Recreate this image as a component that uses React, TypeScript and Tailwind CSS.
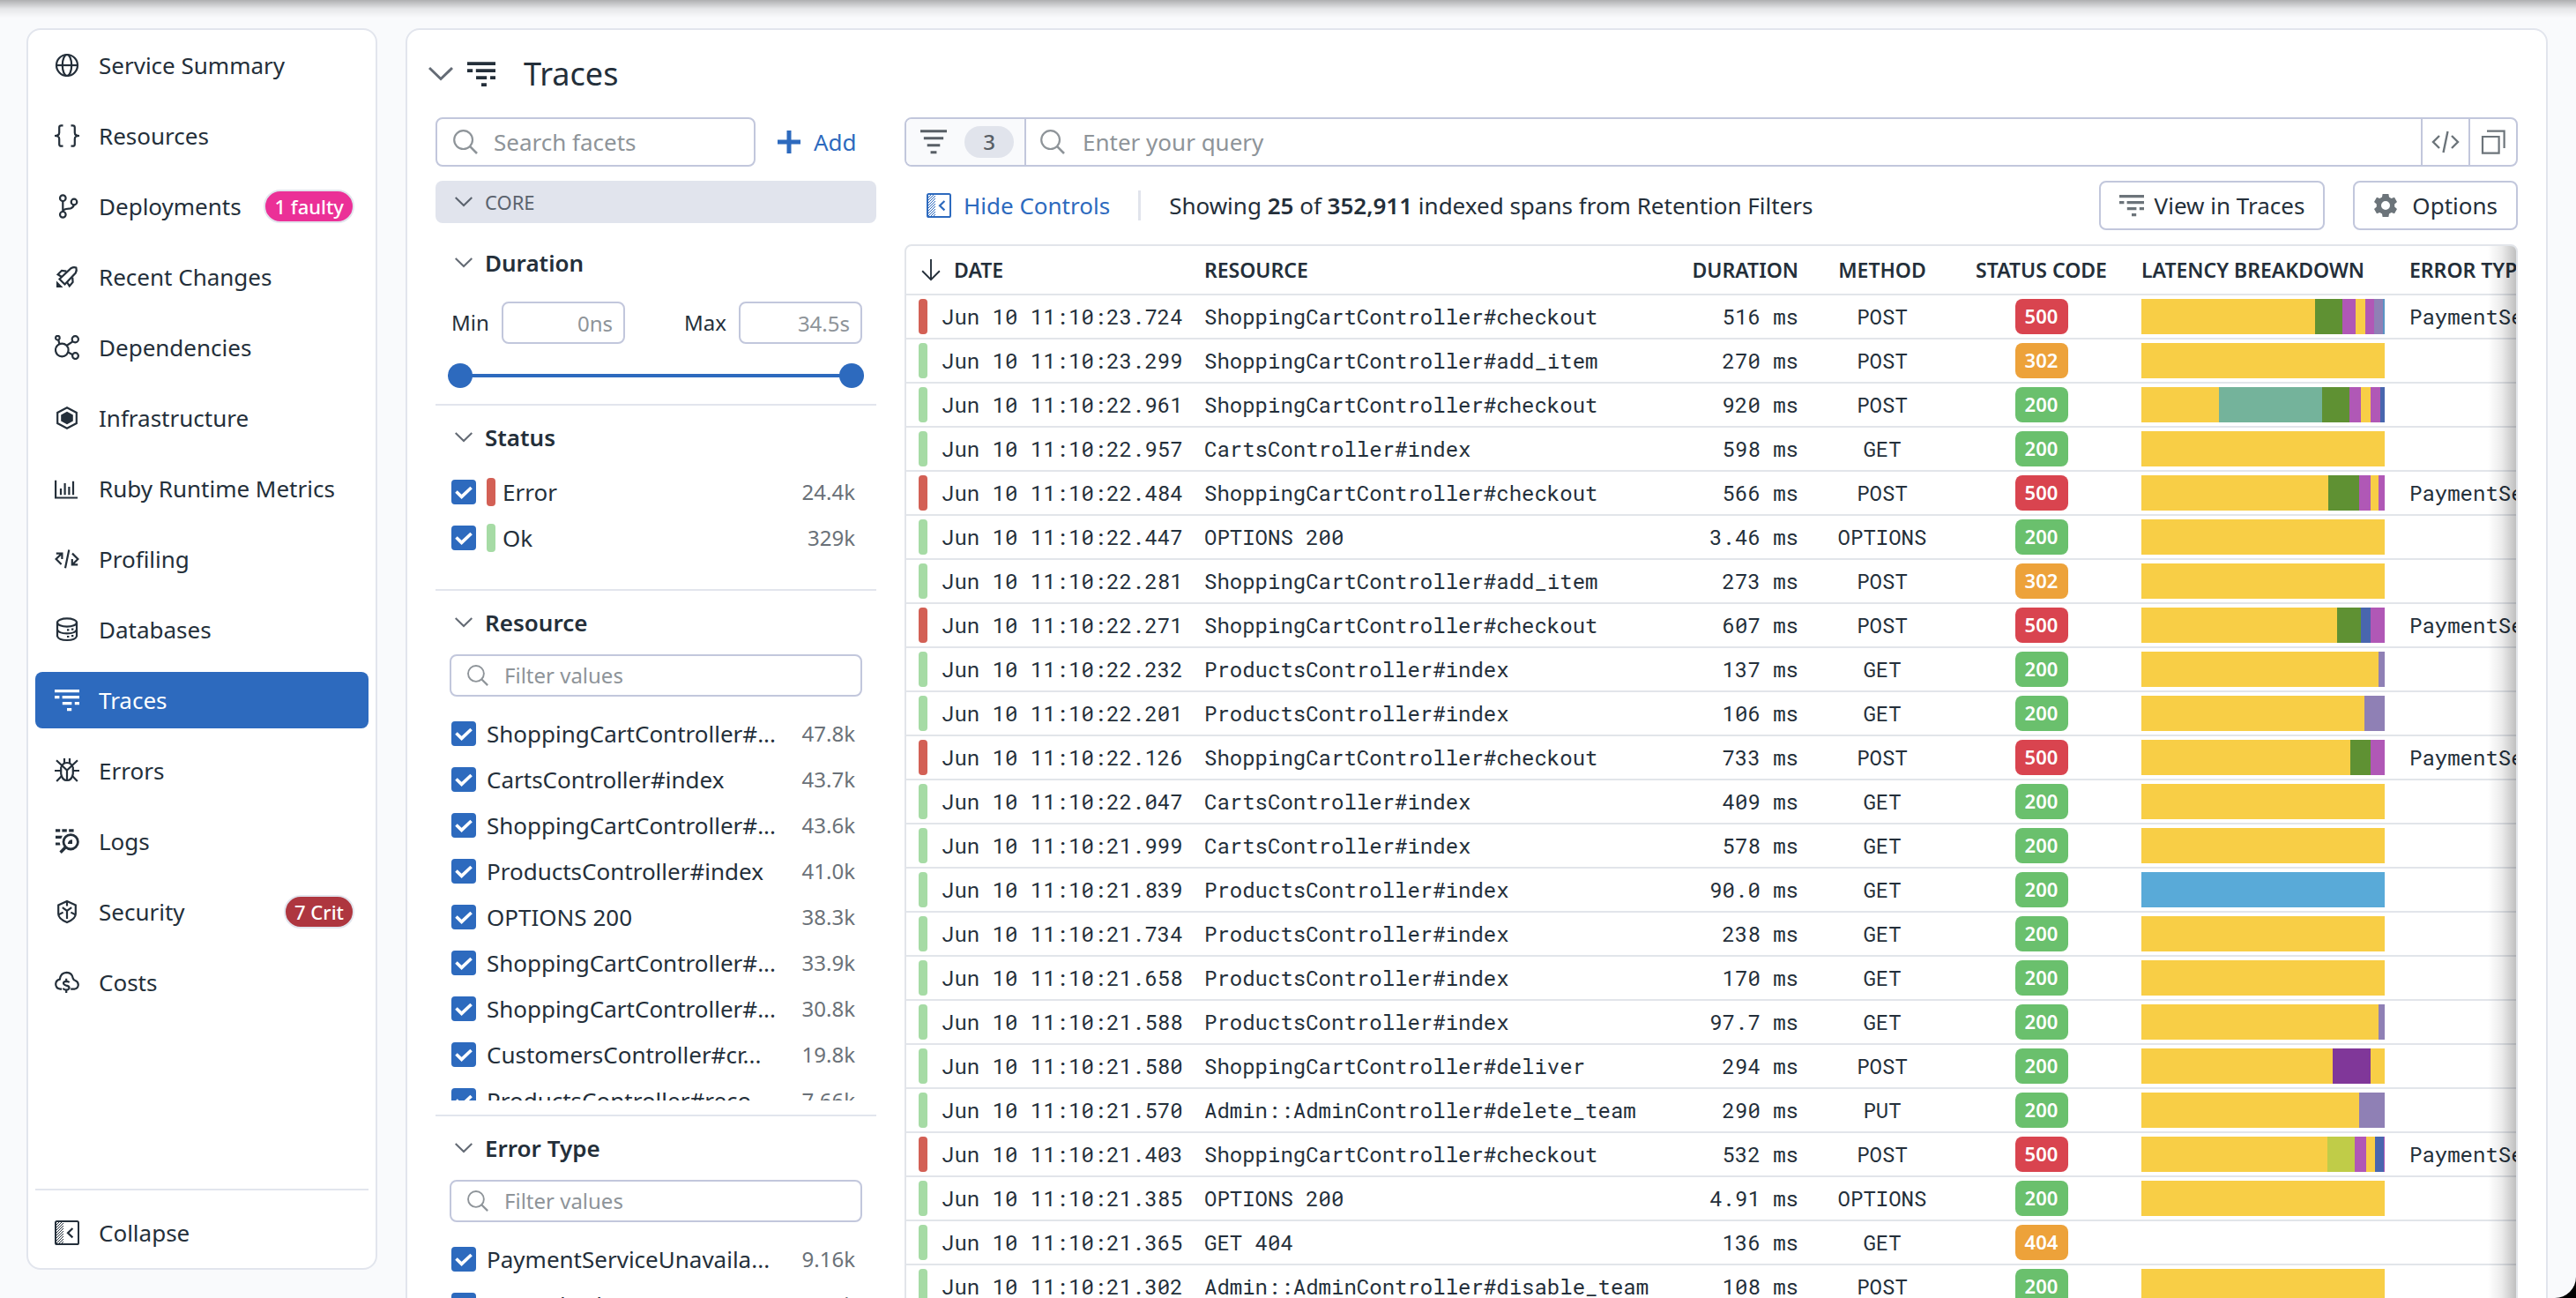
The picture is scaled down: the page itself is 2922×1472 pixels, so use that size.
import React, { useId, useState } from "react";

type IconProps = { className?: string };

function Svg({ className, children }: { className?: string; children: React.ReactNode }) {
  return (
    <svg
      viewBox="0 0 28 28"
      className={className ?? "size-7"}
      fill="none"
      stroke="currentColor"
      strokeWidth={2.2}
      aria-hidden="true"
    >
      {children}
    </svg>
  );
}

const GlobeIcon = ({ className }: IconProps) => (
  <Svg className={className}>
    <circle cx="14" cy="14" r="12" />
    <ellipse cx="14" cy="14" rx="5.2" ry="12" />
    <path d="M2 14H26" />
  </Svg>
);

const BracesIcon = ({ className }: IconProps) => (
  <Svg className={className}>
    <path d="M9.5 2.3H7.5Q5.2 2.3 5.2 4.6V10.5Q5.2 14 0 14Q5.2 14 5.2 17.5V23.4Q5.2 25.7 7.5 25.7H9.5" />
    <path d="M18.5 2.3H20.5Q22.8 2.3 22.8 4.6V10.5Q22.8 14 28 14Q22.8 14 22.8 17.5V23.4Q22.8 25.7 20.5 25.7H18.5" />
  </Svg>
);

const BranchIcon = ({ className }: IconProps) => (
  <Svg className={className}>
    <circle cx="9.3" cy="4.7" r="3.3" />
    <circle cx="9.3" cy="23.3" r="3.3" />
    <circle cx="22" cy="9" r="3.3" />
    <path d="M9.3 8V20M21.8 12.3Q21 15.8 18 16.3L13 17Q9.8 17.6 9.3 20" />
  </Svg>
);

const RocketIcon = ({ className }: IconProps) => (
  <Svg className={className}>
    <path d="M5.5 16.5L18.5 4.2Q21.5 2.6 24.4 3.6Q25.4 6.5 23.8 9.5L11.5 22.5Z" />
    <path d="M8 14L3.6 11.2L8 6.8L13.4 7.6M14 20L16.8 24.4L20.6 20L20.2 14.6" />
    <path d="M2 18.5V26H9.5Z" fill="currentColor" stroke="none" />
  </Svg>
);

const NodesIcon = ({ className }: IconProps) => (
  <Svg className={className}>
    <circle cx="8.3" cy="17" r="7.3" />
    <circle cx="3.4" cy="3.2" r="2.3" />
    <circle cx="23.3" cy="4.7" r="3.6" />
    <circle cx="23.5" cy="23.6" r="3.4" />
    <path d="M4.2 5.4L5.4 10M13.5 12L20.8 7.2M15.3 19.5L20.4 22.2" />
  </Svg>
);

const HexIcon = ({ className }: IconProps) => (
  <Svg className={className}>
    <path d="M14 2.2L24.8 8V20L14 25.8L3.2 20V8Z" />
    <path d="M14 6.7L20.8 10.4V17.6L14 21.3L7.2 17.6V10.4Z" fill="currentColor" stroke="none" />
  </Svg>
);

const BarsIcon = ({ className }: IconProps) => (
  <Svg className={className}>
    <path d="M1.1 4.7V24.5H26" />
    <path d="M7 14V21.3M11.6 8V21.3M16.4 12V21.3M21 5.7V21.3" />
  </Svg>
);

const ProfilingIcon = ({ className }: IconProps) => (
  <Svg className={className}>
    <path d="M7.6 20L1.6 14L8 7.8M1.8 7.6H8.4V14M16.3 3.5L12 24.3" />
    <path d="M20 7.6L26.4 14L20.4 20M19.8 14V20.4H26.2" />
  </Svg>
);

const DatabaseIcon = ({ className }: IconProps) => (
  <Svg className={className}>
    <ellipse cx="14" cy="6" rx="11" ry="4.6" />
    <path d="M3 6V21.5Q4.5 26 14 26T25 21.5V6M3 14Q4.5 18.4 14 18.4T25 14" />
    <path d="M14 14.4H16.4M19 13.6H21.4M14 22H16.4M19 21.2H21.4" />
  </Svg>
);

const TracesIcon = ({ className }: IconProps) => (
  <Svg className={className}>
    <path
      fill="currentColor"
      stroke="none"
      d="M0 2H28V5.2H0ZM0 9H5.4V12.2H0ZM8.6 9H28V12.2H8.6ZM8.8 16H19.4V19.2H8.8ZM22.8 16H28V19.2H22.8ZM14 23H19.2V26.2H14Z"
    />
  </Svg>
);

const BugIcon = ({ className }: IconProps) => (
  <Svg className={className}>
    <path d="M7.2 10.5Q9 5 14 5T20.8 10.5V17.5Q19.6 25 14 25T7.2 17.5Z" />
    <path d="M2 2.3L14 13.6L26 2.3M14 13.6V25M0 14H7M21 14H28M8.2 19.8L2.2 26M19.8 19.8L25.8 26M11 0V5.5M17 0V5.5" />
  </Svg>
);

const LogsIcon = ({ className }: IconProps) => (
  <Svg className={className}>
    <path
      fill="currentColor"
      stroke="none"
      d="M1 .3H6.2V3.5H1ZM8.4 .3H13.8V3.5H8.4ZM16.2 .3H21.6V3.5H16.2ZM1 7.8H8.8L7.4 11H1ZM1 15.4H5.8L6.4 18.6H1ZM14.8 17Q15.4 12.2 20 12.2V17Z"
    />
    <circle cx="18.2" cy="14.8" r="8.2" strokeWidth="2.8" />
    <path d="M12.4 20.8L6.6 26.8" strokeWidth="3.4" />
  </Svg>
);

const ShieldIcon = ({ className }: IconProps) => (
  <Svg className={className}>
    <path d="M14 2L23.8 6.4V16.5Q23.8 22 14 26Q4.2 22 4.2 16.5V6.4Z" />
    <path d="M14 2V7.6M8.8 9.2L14 12.8L19.2 9.2M14 12.8V22M4.4 17.4L9.6 14.6M23.6 17.4L18.4 14.6" />
  </Svg>
);

const CostIcon = ({ className }: IconProps) => (
  <Svg className={className}>
    <path d="M8 21.6H6.4Q1.2 21 1.2 15.8Q1.6 11.4 5.8 10.6Q6.8 3 13.6 2.8Q19.8 3 20.8 9.6Q21.2 11.4 23.4 12Q26.8 13.4 26.8 17Q26.4 21.2 22.4 21.6H18.2" />
    <path d="M16.6 14.2Q15.8 12.8 13.2 12.8Q10 13 10 15Q10.2 17 13.2 17.6Q16.6 18.2 16.6 20.4Q16.2 22.6 13.2 22.6Q10.4 22.6 9.4 20.8M13.2 9.8V13M13.2 22.6V26" />
  </Svg>
);

const CollapseIcon = ({ className }: IconProps) => (
  <Svg className={className}>
    <rect x="1" y="1" width="26" height="26" rx="1.6" strokeWidth="2" />
    <path
      strokeWidth="1"
      d="M2 5L5 2M2 8L8 2M2 11L10 3M2 14L10 6M2 17L10 9M2 20L10 12M2 23L10 15M2 26L10 18M5 26L10 21M8 26L10 24"
    />
    <path d="M20.4 9L15 14.2L20.4 19.4" />
  </Svg>
);

const SearchIcon = ({ className }: IconProps) => (
  <Svg className={className}>
    <circle cx="11.6" cy="11.6" r="10.4" />
    <path d="M19.2 19.2L27 27" strokeWidth="2.6" />
  </Svg>
);

const CaretIcon = ({ className }: IconProps) => (
  <Svg className={className}>
    <path d="M1 7L14 19.5L27 7" strokeWidth="3" />
  </Svg>
);

const FilterIcon = ({ className }: IconProps) => (
  <Svg className={className}>
    <path
      fill="currentColor"
      stroke="none"
      d="M0 1.2H28V4H0ZM3.6 8.6H24.4V11.4H3.6ZM7.2 16.2H20.8V19H7.2ZM10.8 23.6H17.2V26.4H10.8Z"
    />
  </Svg>
);

const GearIcon = ({ className }: IconProps) => (
  <Svg className={className}>
    <path
      fill="currentColor"
      fillRule="evenodd"
      stroke="none"
      d="M10.6 1H17.4L18 4.6L20.6 6.1L24 4.7L27 10L24.2 12.4V15.6L27 18L24 23.3L20.6 21.9L18 23.4L17.4 27H10.6L10 23.4L7.4 21.9L4 23.3L1 18L3.8 15.6V12.4L1 10L4 4.7L7.4 6.1L10 4.6ZM14 9A5 5 0 1 0 14 19A5 5 0 1 0 14 9Z"
    />
  </Svg>
);

type NavItem = {
  label: string;
  Icon: (p: IconProps) => React.ReactElement;
  badge?: string;
  badgeClass?: string;
  active?: boolean;
};

const NAV: NavItem[] = [
  { label: "Service Summary", Icon: GlobeIcon },
  { label: "Resources", Icon: BracesIcon },
  { label: "Deployments", Icon: BranchIcon, badge: "1 faulty", badgeClass: "bg-[#eb3097]" },
  { label: "Recent Changes", Icon: RocketIcon },
  { label: "Dependencies", Icon: NodesIcon },
  { label: "Infrastructure", Icon: HexIcon },
  { label: "Ruby Runtime Metrics", Icon: BarsIcon },
  { label: "Profiling", Icon: ProfilingIcon },
  { label: "Databases", Icon: DatabaseIcon },
  { label: "Traces", Icon: TracesIcon, active: true },
  { label: "Errors", Icon: BugIcon },
  { label: "Logs", Icon: LogsIcon },
  { label: "Security", Icon: ShieldIcon, badge: "7 Crit", badgeClass: "bg-[#ae363f]" },
  { label: "Costs", Icon: CostIcon },
];

function Sidebar() {
  return (
    <nav className="flex h-[calc(100vh-64px)] w-[398px] shrink-0 flex-col rounded-2xl border-2 border-[#e2e5ed] bg-white p-2">
      <ul className="flex flex-col gap-4">
        {NAV.map(({ label, Icon, badge, badgeClass, active }) => (
          <li key={label}>
            <a
              href="#"
              aria-current={active ? "page" : undefined}
              className={`flex h-16 items-center rounded-lg pr-4 pl-[22px] ${active ? "bg-[#2d6abe] text-white" : ""}`}
            >
              <Icon className="size-7 shrink-0" />
              <span className="ml-[22px] flex-1 whitespace-nowrap">{label}</span>
              {badge && (
                <span
                  className={`flex h-[38px] items-center rounded-full border-2 border-[#e2e5ed] px-2.5 text-[22px] font-medium text-white ${badgeClass}`}
                >
                  {badge}
                </span>
              )}
            </a>
          </li>
        ))}
      </ul>
      <div className="mt-auto border-t-2 border-[#e2e5ed] pt-4">
        <button type="button" className="flex h-16 w-full items-center pl-[22px]">
          <CollapseIcon className="size-7" />
          <span className="ml-[22px]">Collapse</span>
        </button>
      </div>
    </nav>
  );
}

function SectionHeader({ title }: { title: string }) {
  return (
    <h3>
      <button type="button" className="flex h-12 items-center pl-[22px] font-semibold">
        <CaretIcon className="size-5 text-[#646b75]" />
        <span className="ml-3.5">{title}</span>
      </button>
    </h3>
  );
}

function FilterBox({ name }: { name: string }) {
  return (
    <label className="mx-4 mt-3 flex h-12 items-center rounded-lg border-2 border-[#c2c7dc] pl-[18px]">
      <SearchIcon className="size-6 shrink-0 text-[#8e9499]" />
      <input
        type="text"
        aria-label={`Filter ${name} values`}
        placeholder="Filter values"
        className="ml-[18px] w-full min-w-0 flex-1 bg-transparent text-2xl outline-none placeholder:text-[#8e9499]"
      />
    </label>
  );
}

function FacetRow({ label, count, barClass }: { label: string; count: string; barClass?: string }) {
  const id = useId();
  const [checked, setChecked] = useState(true);
  return (
    <li className="flex h-[52px] items-center pr-6 pl-[18px]">
      <span className="relative flex size-7 shrink-0">
        <input
          id={id}
          type="checkbox"
          checked={checked}
          onChange={(e) => setChecked(e.target.checked)}
          className="size-7 appearance-none rounded-sm border-2 border-[#2d6abe] checked:bg-[#2d6abe]"
        />
        {checked && (
          <svg viewBox="0 0 28 28" className="pointer-events-none absolute inset-0 text-white" aria-hidden="true">
            <path d="M5.5 13.5L11.6 19.4L22.6 9" fill="none" stroke="currentColor" strokeWidth="3.6" />
          </svg>
        )}
      </span>
      {barClass && <span className={`ml-3 h-8 w-2.5 rounded-sm ${barClass}`} />}
      <label
        htmlFor={id}
        className={`flex-1 overflow-hidden whitespace-nowrap ${barClass ? "ml-2" : "ml-3"}`}
      >
        {label}
      </label>
      <span className="text-2xl text-[#6a7178]">{count}</span>
    </li>
  );
}

const RESOURCE_FACETS: [string, string][] = [
  ["ShoppingCartController#...", "47.8k"],
  ["CartsController#index", "43.7k"],
  ["ShoppingCartController#...", "43.6k"],
  ["ProductsController#index", "41.0k"],
  ["OPTIONS 200", "38.3k"],
  ["ShoppingCartController#...", "33.9k"],
  ["ShoppingCartController#...", "30.8k"],
  ["CustomersController#cr...", "19.8k"],
  ["ProductsController#reco...", "7.66k"],
];

const THUMB =
  "pointer-events-none absolute inset-0 h-7 w-full appearance-none bg-transparent [&::-webkit-slider-thumb]:pointer-events-auto [&::-webkit-slider-thumb]:size-7 [&::-webkit-slider-thumb]:appearance-none [&::-webkit-slider-thumb]:rounded-full [&::-webkit-slider-thumb]:bg-[#2d6abe]";

function Facets() {
  return (
    <aside className="w-[500px] shrink-0">
      <div className="flex items-center">
        <label className="flex h-14 w-[363px] items-center rounded-lg border-2 border-[#c2c7dc] pl-[18px]">
          <SearchIcon className="size-7 shrink-0 text-[#8e9499]" />
          <input
            type="text"
            aria-label="Search facets"
            placeholder="Search facets"
            className="ml-[18px] w-full min-w-0 flex-1 bg-transparent outline-none placeholder:text-[#8e9499]"
          />
        </label>
        <button type="button" className="ml-6 flex items-center text-[#2d6abe]">
          <Svg className="size-7">
            <path d="M14 1V27M1 14H27" strokeWidth="5" />
          </Svg>
          <span className="ml-3.5">Add</span>
        </button>
      </div>

      <button
        type="button"
        className="mt-4 flex h-12 w-full items-center rounded-lg bg-[#e1e4ed] pl-[22px] text-[22px] text-[#5b636e]"
      >
        <CaretIcon className="size-5" />
        <span className="ml-3.5">CORE</span>
      </button>

      <section className="mt-[21px]">
        <SectionHeader title="Duration" />
        <div className="mt-5 flex items-center justify-between px-4 text-2xl">
          <label className="flex items-center">
            <span className="ml-0.5 w-[57px]">Min</span>
            <input
              type="text"
              placeholder="0ns"
              className="h-12 w-[140px] rounded-lg border-2 border-[#c2c7dc] px-3 text-right outline-none placeholder:text-[#8e9499]"
            />
          </label>
          <label className="flex items-center">
            <span className="w-[62px]">Max</span>
            <input
              type="text"
              placeholder="34.5s"
              className="h-12 w-[140px] rounded-lg border-2 border-[#c2c7dc] px-3 text-right outline-none placeholder:text-[#8e9499]"
            />
          </label>
        </div>
        <div className="relative mx-3.5 mt-[22px] flex h-7 items-center">
          <div className="h-1 w-full rounded-full bg-[#2d6abe]" />
          <input type="range" aria-label="Minimum duration" min={0} max={100} defaultValue={0} className={THUMB} />
          <input type="range" aria-label="Maximum duration" min={0} max={100} defaultValue={100} className={THUMB} />
        </div>
      </section>

      <section className="mt-[18px] border-t-2 border-[#e2e5ed] pt-3">
        <SectionHeader title="Status" />
        <ul className="mt-3">
          <FacetRow label="Error" count="24.4k" barClass="bg-[#d36055]" />
          <FacetRow label="Ok" count="329k" barClass="bg-[#a6dba5]" />
        </ul>
      </section>

      <section className="mt-8 border-t-2 border-[#e2e5ed] pt-3">
        <SectionHeader title="Resource" />
        <FilterBox name="resource" />
        <ul className="mt-4 max-h-[442px] overflow-hidden">
          {RESOURCE_FACETS.map(([label, count], i) => (
            <FacetRow key={i} label={label} count={count} />
          ))}
        </ul>
      </section>

      <section className="mt-4 border-t-2 border-[#e2e5ed] pt-3">
        <SectionHeader title="Error Type" />
        <FilterBox name="error type" />
        <ul className="mt-4">
          <FacetRow label="PaymentServiceUnavaila..." count="9.16k" />
          <FacetRow label="NoMethodError" count="5.05k" />
        </ul>
      </section>
    </aside>
  );
}

const SEG = {
  y: "bg-[#f8ce46]",
  g: "bg-[#5f9133]",
  m: "bg-[#b058b6]",
  v: "bg-[#8f80b5]",
  s: "bg-[#5a94c4]",
  t: "bg-[#74b39b]",
  b: "bg-[#4966ae]",
  c: "bg-[#59aad8]",
  p: "bg-[#803799]",
  l: "bg-[#c0cc48]",
};

type Seg = [keyof typeof SEG, number];
type Span = { time: string; resource: string; duration: string; method: string; code: number; segs: Seg[] };

const FULL: Seg[] = [["y", 450]];
const CHECKOUT = "ShoppingCartController#checkout";
const PRODUCTS = "ProductsController#index";
const CARTS = "CartsController#index";

const span = (
  time: string,
  resource: string,
  duration: string,
  method: string,
  code: number,
  segs: Seg[] = FULL,
): Span => ({ time, resource, duration, method, code, segs });

const SPANS: Span[] = [
  span("23.724", CHECKOUT, "516 ms", "POST", 500, [["y", 322], ["g", 50], ["m", 25], ["y", 17], ["m", 17], ["v", 15], ["s", 4]]),
  span("23.299", "ShoppingCartController#add_item", "270 ms", "POST", 302),
  span("22.961", CHECKOUT, "920 ms", "POST", 200, [["y", 144], ["t", 191], ["g", 49], ["m", 22], ["y", 18], ["m", 18], ["b", 8]]),
  span("22.957", CARTS, "598 ms", "GET", 200),
  span("22.484", CHECKOUT, "566 ms", "POST", 500, [["y", 346], ["g", 56], ["m", 22], ["y", 15], ["m", 11]]),
  span("22.447", "OPTIONS 200", "3.46 ms", "OPTIONS", 200),
  span("22.281", "ShoppingCartController#add_item", "273 ms", "POST", 302),
  span("22.271", CHECKOUT, "607 ms", "POST", 500, [["y", 362], ["g", 44], ["b", 18], ["m", 26]]),
  span("22.232", PRODUCTS, "137 ms", "GET", 200, [["y", 439], ["v", 11]]),
  span("22.201", PRODUCTS, "106 ms", "GET", 200, [["y", 413], ["v", 37]]),
  span("22.126", CHECKOUT, "733 ms", "POST", 500, [["y", 387], ["g", 37], ["m", 26]]),
  span("22.047", CARTS, "409 ms", "GET", 200),
  span("21.999", CARTS, "578 ms", "GET", 200),
  span("21.839", PRODUCTS, "90.0 ms", "GET", 200, [["c", 450]]),
  span("21.734", PRODUCTS, "238 ms", "GET", 200),
  span("21.658", PRODUCTS, "170 ms", "GET", 200),
  span("21.588", PRODUCTS, "97.7 ms", "GET", 200, [["y", 439], ["v", 11]]),
  span("21.580", "ShoppingCartController#deliver", "294 ms", "POST", 200, [["y", 354], ["p", 70], ["y", 26]]),
  span("21.570", "Admin::AdminController#delete_team", "290 ms", "PUT", 200, [["y", 403], ["v", 47]]),
  span("21.403", CHECKOUT, "532 ms", "POST", 500, [["y", 344], ["l", 51], ["m", 21], ["y", 16], ["b", 16], ["m", 2]]),
  span("21.385", "OPTIONS 200", "4.91 ms", "OPTIONS", 200),
  span("21.365", "GET 404", "136 ms", "GET", 404, []),
  span("21.302", "Admin::AdminController#disable_team", "108 ms", "POST", 200),
];

function codeClass(code: number) {
  if (code >= 500) return "bg-[#d9444f]";
  if (code >= 300) return "bg-[#eda23a]";
  return "bg-[#6ac06d]";
}

function SpanTable() {
  return (
    <div className="relative mt-4 overflow-hidden rounded-lg border-2 border-[#e2e5ea]">
      <table className="w-full table-fixed border-collapse text-left whitespace-nowrap">
        <colgroup>
          <col className="w-[324px]" />
          <col />
          <col className="w-[150px]" />
          <col className="w-[162px]" />
          <col className="w-[199px]" />
          <col className="w-[304px]" />
          <col className="w-[135px]" />
        </colgroup>
        <thead>
          <tr className="h-[55px] border-b-2 border-[#e2e5ea] text-[23px] [&>th]:overflow-hidden [&>th]:px-3.5 [&>th]:font-semibold">
            <th>
              <button type="button" className="flex items-center gap-3.5">
                <Svg className="ml-0.5 h-7 w-6">
                  <path d="M14 0V26.5M2.5 15.5L14 27L25.5 15.5" />
                </Svg>
                DATE
              </button>
            </th>
            <th>RESOURCE</th>
            <th className="text-right">DURATION</th>
            <th className="text-center">METHOD</th>
            <th className="text-center">STATUS CODE</th>
            <th>LATENCY BREAKDOWN</th>
            <th>ERROR TYPE</th>
          </tr>
        </thead>
        <tbody className="font-['Roboto_Mono','Liberation_Mono',monospace] text-2xl">
          {SPANS.map((s) => (
            <tr
              key={s.time}
              className="h-[50px] border-b-2 border-[#e2e5ea] [&>td]:overflow-hidden [&>td]:px-3.5"
            >
              <td>
                <div className="flex items-center gap-4">
                  <span
                    className={`h-10 w-2.5 shrink-0 rounded-sm ${s.code >= 500 ? "bg-[#d36055]" : "bg-[#a6dba5]"}`}
                  />
                  {`Jun 10 11:10:${s.time}`}
                </div>
              </td>
              <td>{s.resource}</td>
              <td className="text-right">{s.duration}</td>
              <td className="text-center">{s.method}</td>
              <td>
                <span
                  className={`mx-auto flex h-10 w-[60px] items-center justify-center rounded-lg font-['Noto_Sans',sans-serif] text-[22px] font-semibold text-white ${codeClass(s.code)}`}
                >
                  {s.code}
                </span>
              </td>
              <td>
                <div className="flex h-10">
                  {s.segs.map(([color, amount], i) => (
                    <span key={i} className={SEG[color]} style={{ width: `${(amount / 450) * 100}%` }} />
                  ))}
                </div>
              </td>
              <td>{s.code >= 500 ? "PaymentServiceUnavailable" : ""}</td>
            </tr>
          ))}
        </tbody>
      </table>
      <div className="pointer-events-none absolute inset-y-0 right-0 w-8 bg-linear-to-l from-black/25 via-black/8 to-transparent" />
    </div>
  );
}

function Explorer() {
  const outlined = "flex h-14 items-center rounded-lg border-2 border-[#c2c7dc] px-[21px]";
  return (
    <div className="min-w-0 flex-1">
      <div className="flex h-14 overflow-hidden rounded-lg border-2 border-[#c2c7dc]">
        <button
          type="button"
          className="flex items-center border-r-2 border-[#c2c7dc] bg-[#f9fafc] pr-3 pl-4 text-[#585f66]"
        >
          <FilterIcon className="size-[30px]" />
          <span className="ml-5 flex h-9 w-14 items-center justify-center rounded-full bg-[#e1e4ec] text-2xl font-medium">
            3
          </span>
        </button>
        <label className="flex flex-1 items-center pl-4">
          <SearchIcon className="size-7 shrink-0 text-[#8e9499]" />
          <input
            type="text"
            aria-label="Query"
            placeholder="Enter your query"
            className="ml-5 w-full min-w-0 flex-1 bg-transparent outline-none placeholder:text-[#8e9499]"
          />
        </label>
        <button
          type="button"
          aria-label="Edit as code"
          className="flex w-[54px] items-center justify-center border-l-2 border-[#c2c7dc] text-[#6c747a]"
        >
          <svg viewBox="0 0 32 28" className="h-7 w-8" fill="none" stroke="currentColor" strokeWidth="2.4" aria-hidden="true">
            <path d="M9 7L2 14L9 21M23 7L30 14L23 21M18.5 2L13.5 26" />
          </svg>
        </button>
        <button
          type="button"
          aria-label="Copy query"
          className="flex w-[54px] items-center justify-center border-l-2 border-[#c2c7dc] text-[#6c747a]"
        >
          <Svg className="size-7">
            <path d="M2 8H20.6V26.6H2ZM7 1.6H26.6V21" />
          </Svg>
        </button>
      </div>

      <div className="mt-4 flex h-14 items-center">
        <button type="button" className="ml-[25px] flex items-center gap-3.5 text-[#2d6abe]">
          <CollapseIcon className="size-7" />
          Hide Controls
        </button>
        <span className="ml-8 h-[34px] w-[3px] bg-[#e1e4ec]" />
        <p className="ml-8 whitespace-nowrap">
          Showing <b className="font-semibold">25</b> of <b className="font-semibold">352,911</b> indexed spans from
          Retention Filters
        </p>
        <div className="ml-auto flex gap-8">
          <button type="button" className={outlined}>
            <TracesIcon className="size-7 text-[#6c747a]" />
            <span className="ml-3">View in Traces</span>
          </button>
          <button type="button" className={outlined}>
            <GearIcon className="size-7 text-[#6c747a]" />
            <span className="ml-4">Options</span>
          </button>
        </div>
      </div>

      <SpanTable />
    </div>
  );
}

export default function App() {
  return (
    <div className="h-screen bg-black">
      <div className="relative flex h-screen gap-8 overflow-hidden rounded-br-3xl bg-[#f9fafc] pt-8 pr-8 pl-[30px] font-['Noto_Sans',sans-serif] text-[26px] leading-9 text-[#242f3a]">
        <div className="pointer-events-none absolute inset-x-0 top-0 h-5 bg-linear-to-b from-black/30 via-black/8 to-transparent" />
        <Sidebar />
        <main className="h-max min-w-0 flex-1 rounded-2xl border-2 border-[#e2e5ed] bg-white">
          <header className="flex h-[99px] items-center pl-6">
            <button type="button" aria-label="Collapse traces" className="text-[#646b75]">
              <CaretIcon className="size-7" />
            </button>
            <TracesIcon className="ml-4 size-8" />
            <h2 className="ml-8 text-4xl">Traces</h2>
          </header>
          <div className="flex gap-8 px-8 pb-8">
            <Facets />
            <Explorer />
          </div>
        </main>
      </div>
    </div>
  );
}
